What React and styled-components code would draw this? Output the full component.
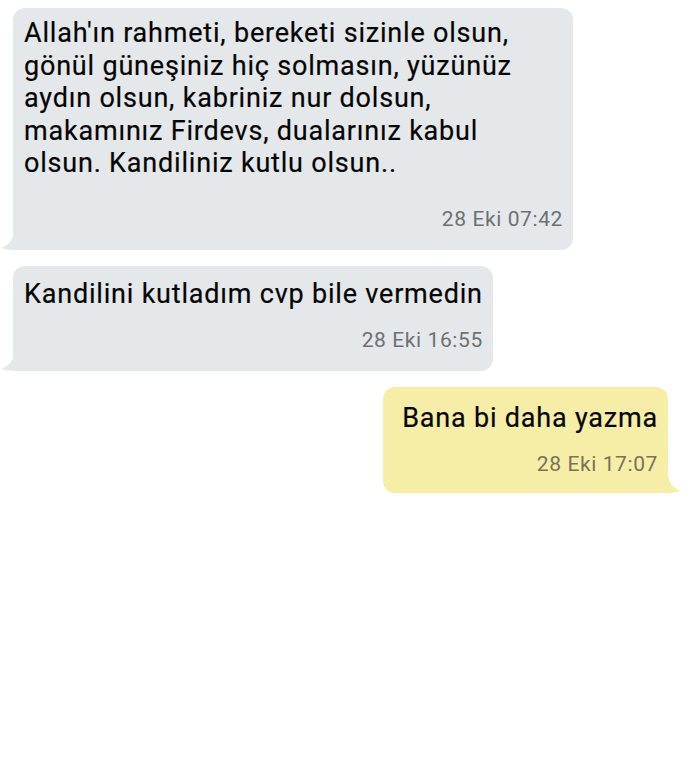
import React from "react";
import styled, { createGlobalStyle } from "styled-components";

const GlobalStyle = createGlobalStyle`
  body {
    margin: 0;
    background: #ffffff;
    font-family: Roboto, "Liberation Sans", sans-serif;
  }
`;

const Thread = styled.div`
  display: flex;
  flex-direction: column;
  gap: 16px;
  padding: 8px 22px 0 13px;
  width: 690px;
  height: 767px;
  box-sizing: border-box;
`;

const Row = styled.div`
  display: flex;
  justify-content: ${(p) => (p.$mine ? "flex-end" : "flex-start")};
`;

const Bubble = styled.div`
  position: relative;
  max-width: 560px;
  box-sizing: border-box;
  padding: ${(p) => p.$pad};
  background: ${(p) => (p.$mine ? "#f6eea7" : "#e5e8eb")};
  border-radius: 12px;
  border-bottom-left-radius: ${(p) => (p.$mine ? "12px" : "2px")};
  border-bottom-right-radius: ${(p) => (p.$mine ? "2px" : "12px")};
  display: flex;
  flex-direction: column;
`;

const Text = styled.div`
  font-size: 27px;
  line-height: 32.5px;
  letter-spacing: 0.8px;
  color: #050505;
  -webkit-text-stroke: 0.2px #050505;
`;

const Time = styled.div`
  align-self: flex-end;
  font-size: 21px;
  line-height: 26px;
  letter-spacing: 0.6px;
  color: ${(p) => (p.$mine ? "#77725c" : "#6c7074")};
  margin-top: ${(p) => p.$gap};
`;

const Tail = styled.svg`
  position: absolute;
  bottom: 0;
  width: 14px;
  height: 20px;
  ${(p) => (p.$mine ? "right: -13px; transform: scaleX(-1);" : "left: -12px;")}
`;

function BubbleTail({ mine }) {
  return (
    <Tail $mine={mine} viewBox="0 0 14 20">
      <path
        d="M13 0 C13 9 8 15 0 18 C5 19 9 20 14 20 L14 0 Z"
        fill={mine ? "#f6eea7" : "#e5e8eb"}
      />
    </Tail>
  );
}

const messages = [
  {
    text: "Allah'ın rahmeti, bereketi sizinle olsun, gönül güneşiniz hiç solmasın, yüzünüz aydın olsun, kabriniz nur dolsun, makamınız Firdevs, dualarınız kabul olsun. Kandiliniz kutlu olsun..",
    time: "28 Eki 07:42",
    pad: "9px 10px 18px 11px",
    gap: "26px",
  },
  {
    text: "Kandilini kutladım cvp bile vermedin",
    time: "28 Eki 16:55",
    pad: "12px 10px 18px 11px",
    gap: "17px",
  },
  {
    text: "Bana bi daha yazma",
    time: "28 Eki 17:07",
    mine: true,
    pad: "15px 10px 16px 19px",
    gap: "16px",
  },
];

export default function App() {
  return (
    <>
      <GlobalStyle />
      <Thread>
        {messages.map((m, i) => (
          <Row key={i} $mine={m.mine}>
            <Bubble $mine={m.mine} $pad={m.pad}>
              <Text>{m.text}</Text>
              <Time $mine={m.mine} $gap={m.gap}>
                {m.time}
              </Time>
              <BubbleTail mine={m.mine} />
            </Bubble>
          </Row>
        ))}
      </Thread>
    </>
  );
}
